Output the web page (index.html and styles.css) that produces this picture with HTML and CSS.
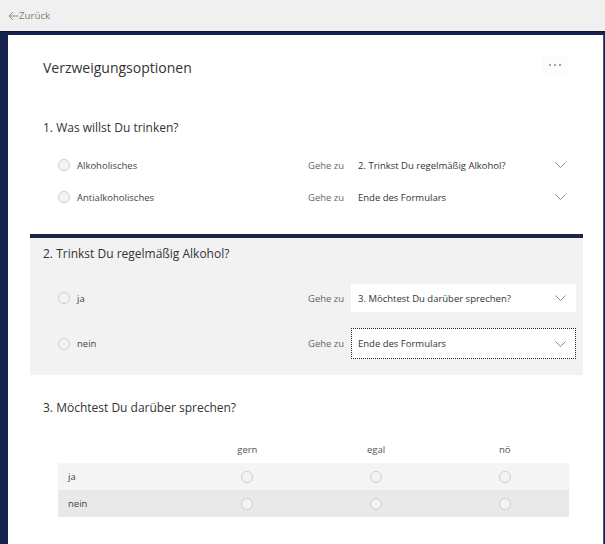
FILE: index.html
```html
<!DOCTYPE html>
<html>
<head>
<meta name="viewport" content="width=device-width, initial-scale=1.0">
<link rel="stylesheet" href="styles.css">
</head>
<body>
  <div class="topbar">
    <a class="back" href="#">
      <svg width="11" height="10" viewBox="0 0 11 10"><path d="M10.5 5H1M5 1L1 5l4 4" fill="none" stroke="#8a8a8a" stroke-width="1"/></svg>Zurück
    </a>
  </div>
  <div class="frame">
    <div class="panel">
      <div class="header">
        <h1>Verzweigungsoptionen</h1>
        <div class="more">
          <svg width="14" height="4" viewBox="0 0 14 4"><circle cx="2" cy="2" r="1" fill="#888"/><circle cx="7" cy="2" r="1" fill="#888"/><circle cx="12" cy="2" r="1" fill="#888"/></svg>
        </div>
      </div>

      <div class="section first">
        <h2>1. Was willst Du trinken?</h2>
        <div class="options">
          <div class="option">
            <div class="choice"><span class="radio"></span>Alkoholisches</div>
            <span class="goto">Gehe zu</span>
            <div class="select plain"><span>2. Trinkst Du regelmäßig Alkohol?</span><svg class="chev" width="11" height="6" viewBox="0 0 11 6"><path d="M0.5 0.5l5 5 5-5" fill="none" stroke="#888"/></svg></div>
          </div>
          <div class="option">
            <div class="choice"><span class="radio"></span>Antialkoholisches</div>
            <span class="goto">Gehe zu</span>
            <div class="select plain"><span>Ende des Formulars</span><svg class="chev" width="11" height="6" viewBox="0 0 11 6"><path d="M0.5 0.5l5 5 5-5" fill="none" stroke="#888"/></svg></div>
          </div>
        </div>
      </div>

      <div class="section active">
        <h2>2. Trinkst Du regelmäßig Alkohol?</h2>
        <div class="options spaced">
          <div class="option">
            <div class="choice"><span class="radio"></span>ja</div>
            <span class="goto">Gehe zu</span>
            <div class="select"><span>3. Möchtest Du darüber sprechen?</span><svg class="chev" width="11" height="6" viewBox="0 0 11 6"><path d="M0.5 0.5l5 5 5-5" fill="none" stroke="#888"/></svg></div>
          </div>
          <div class="option">
            <div class="choice"><span class="radio"></span>nein</div>
            <span class="goto">Gehe zu</span>
            <div class="select focused"><span>Ende des Formulars</span><svg class="chev" width="11" height="6" viewBox="0 0 11 6"><path d="M0.5 0.5l5 5 5-5" fill="none" stroke="#888"/></svg></div>
          </div>
        </div>
      </div>

      <div class="section last">
        <h2>3. Möchtest Du darüber sprechen?</h2>
        <div class="matrix">
          <div class="mrow head">
            <span></span><span>gern</span><span>egal</span><span>nö</span>
          </div>
          <div class="mrow odd">
            <span class="label">ja</span><span><i class="radio"></i></span><span><i class="radio"></i></span><span><i class="radio"></i></span>
          </div>
          <div class="mrow even">
            <span class="label">nein</span><span><i class="radio"></i></span><span><i class="radio"></i></span><span><i class="radio"></i></span>
          </div>
        </div>
      </div>
    </div>
  </div>
</body>
</html>
```

FILE: styles.css
```css
* {box-sizing: border-box;}

body{
  margin: 0;
  height: 544px;
  overflow: hidden;
  font-family: "Open Sans", "Noto Sans", sans-serif;
  color: #333;
  background: #f0f0f0;
}

.topbar{
  height: 31px;
  background: #f0f0f0;
  padding-left: 8px;
  display: flex;
  align-items: center;
}

.back{
  display: flex;
  align-items: center;
  font-size: 9.7px;
  color: #7a7a7a;
  text-decoration: none;
}

.frame{
  background: #16234d;
  border-top: 1px solid #0f1630;
  padding: 3px 0 0 8px;
  height: 513px;
}

.panel{
  background: #fff;
  height: 100%;
  margin-right: 1px;
  border-right: 1px solid #4a5683;
}

.header{
  display: flex;
  justify-content: space-between;
  align-items: flex-start;
  padding: 23px 35px 0 35px;
}

.header h1{
  margin: 0;
  font-size: 14px;
  font-weight: normal;
  line-height: 20px;
  color: #333;
}

.more{
  width: 26px;
  height: 20px;
  margin-top: -3px;
  background: #fcfcfc;
  display: flex;
  align-items: center;
  justify-content: center;
}

.section{
  margin: 0 20px 0 22px;
  padding: 0 7px 0 13px;
}

.section h2{
  margin: 0;
  font-size: 12px;
  font-weight: normal;
  line-height: 20px;
  color: #333;
}

.first{
  margin-top: 40px;
}

.active{
  margin-top: 21px;
  border-top: 4px solid #1c2646;
  background: #f2f2f2;
  padding-top: 6px;
  padding-bottom: 17px;
}

.last{
  margin-top: 23px;
}

.options{
  margin-top: 11px;
  margin-left: 15px;
}

.option{
  display: grid;
  grid-template-columns: 1fr 43px 225px;
  align-items: center;
  height: 32px;
  font-size: 9.5px;
}

.options.spaced{
  margin-top: 19px;
  display: flex;
  flex-direction: column;
  gap: 15px;
}

.options.spaced .option{
  height: 30px;
}

.choice{
  display: flex;
  align-items: center;
  color: #444;
}

.radio{
  display: inline-block;
  width: 12px;
  height: 12px;
  border-radius: 50%;
  border: 1px solid #cdcdcd;
  background: #f3f3f3;
  margin-right: 7px;
}

.goto{
  color: #666;
}

.select{
  display: flex;
  align-items: center;
  justify-content: space-between;
  height: 28px;
  padding: 0 9px 0 6px;
  background: #fff;
  border: 1px solid transparent;
  color: #333;
}

.select.focused{
  height: 31px;
  border: 1px dotted #222;
}

.chev{
  display: block;
}

.matrix{
  margin: 22px 7px 0 15px;
  font-size: 9.5px;
}

.mrow{
  display: grid;
  grid-template-columns: 125px repeat(3, 1fr);
  align-items: center;
  height: 27px;
}

.mrow span{
  display: flex;
  justify-content: center;
}

.mrow .label{
  justify-content: flex-start;
  padding-left: 10px;
  color: #444;
}

.mrow.head{
  height: 23px;
  align-items: flex-start;
  line-height: 20px;
  color: #555;
}

.mrow.odd{
  background: #f4f4f4;
}

.mrow.even{
  background: #e9e9e9;
}

.mrow .radio{
  margin: 0;
}
```
